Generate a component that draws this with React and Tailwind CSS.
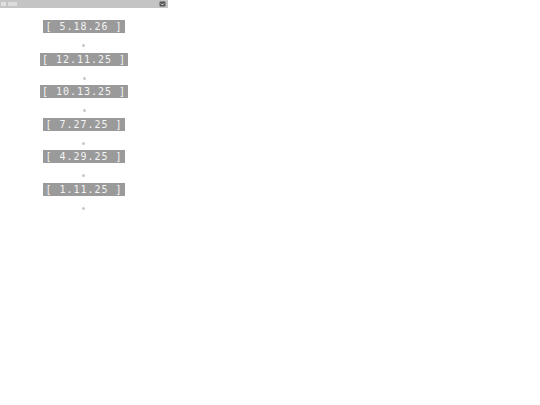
const dates = ['5.18.26', '12.11.25', '10.13.25', '7.27.25', '4.29.25', '1.11.25'];

export default function App() {
  return (
    <div className="w-[540px] h-[405px] bg-white" style={{ fontFamily: '"DejaVu Sans Mono", monospace' }}>
      <div className="w-[168px] h-[8px] bg-[#c4c4c4] flex items-center justify-between px-[1px]">
        <div className="flex items-center gap-[2px]">
          <span className="block w-[5px] h-[4px] bg-[#e0e0e0]"></span>
          <span className="block w-[9px] h-[4px] bg-[#dcdcdc]"></span>
        </div>
        <svg width="7" height="6" viewBox="0 0 7 6" className="mr-[1px]">
          <rect x="0.5" y="0.5" width="6" height="5" rx="1" fill="#555" />
          <path d="M2 2.5 L3.5 4 L5 2.5" stroke="#eee" strokeWidth="1" fill="none" />
        </svg>
      </div>
      <div className="w-[168px] flex flex-col items-center pt-[12px]">
        {dates.map((d) => (
          <div key={d} className="flex flex-col items-center">
            <div className="h-[13px] bg-[#9a9a9a] text-[#f4f4f4] text-[10px] leading-[13px] tracking-[1px] px-[2px] whitespace-pre">
              {`[ ${d} ]`}
            </div>
            <div className="h-[19.5px] flex justify-center pt-[11px]">
              <span className="block w-[3px] h-[3px] rounded-full bg-[#c8c8c8]"></span>
            </div>
          </div>
        ))}
      </div>
    </div>
  );
}
